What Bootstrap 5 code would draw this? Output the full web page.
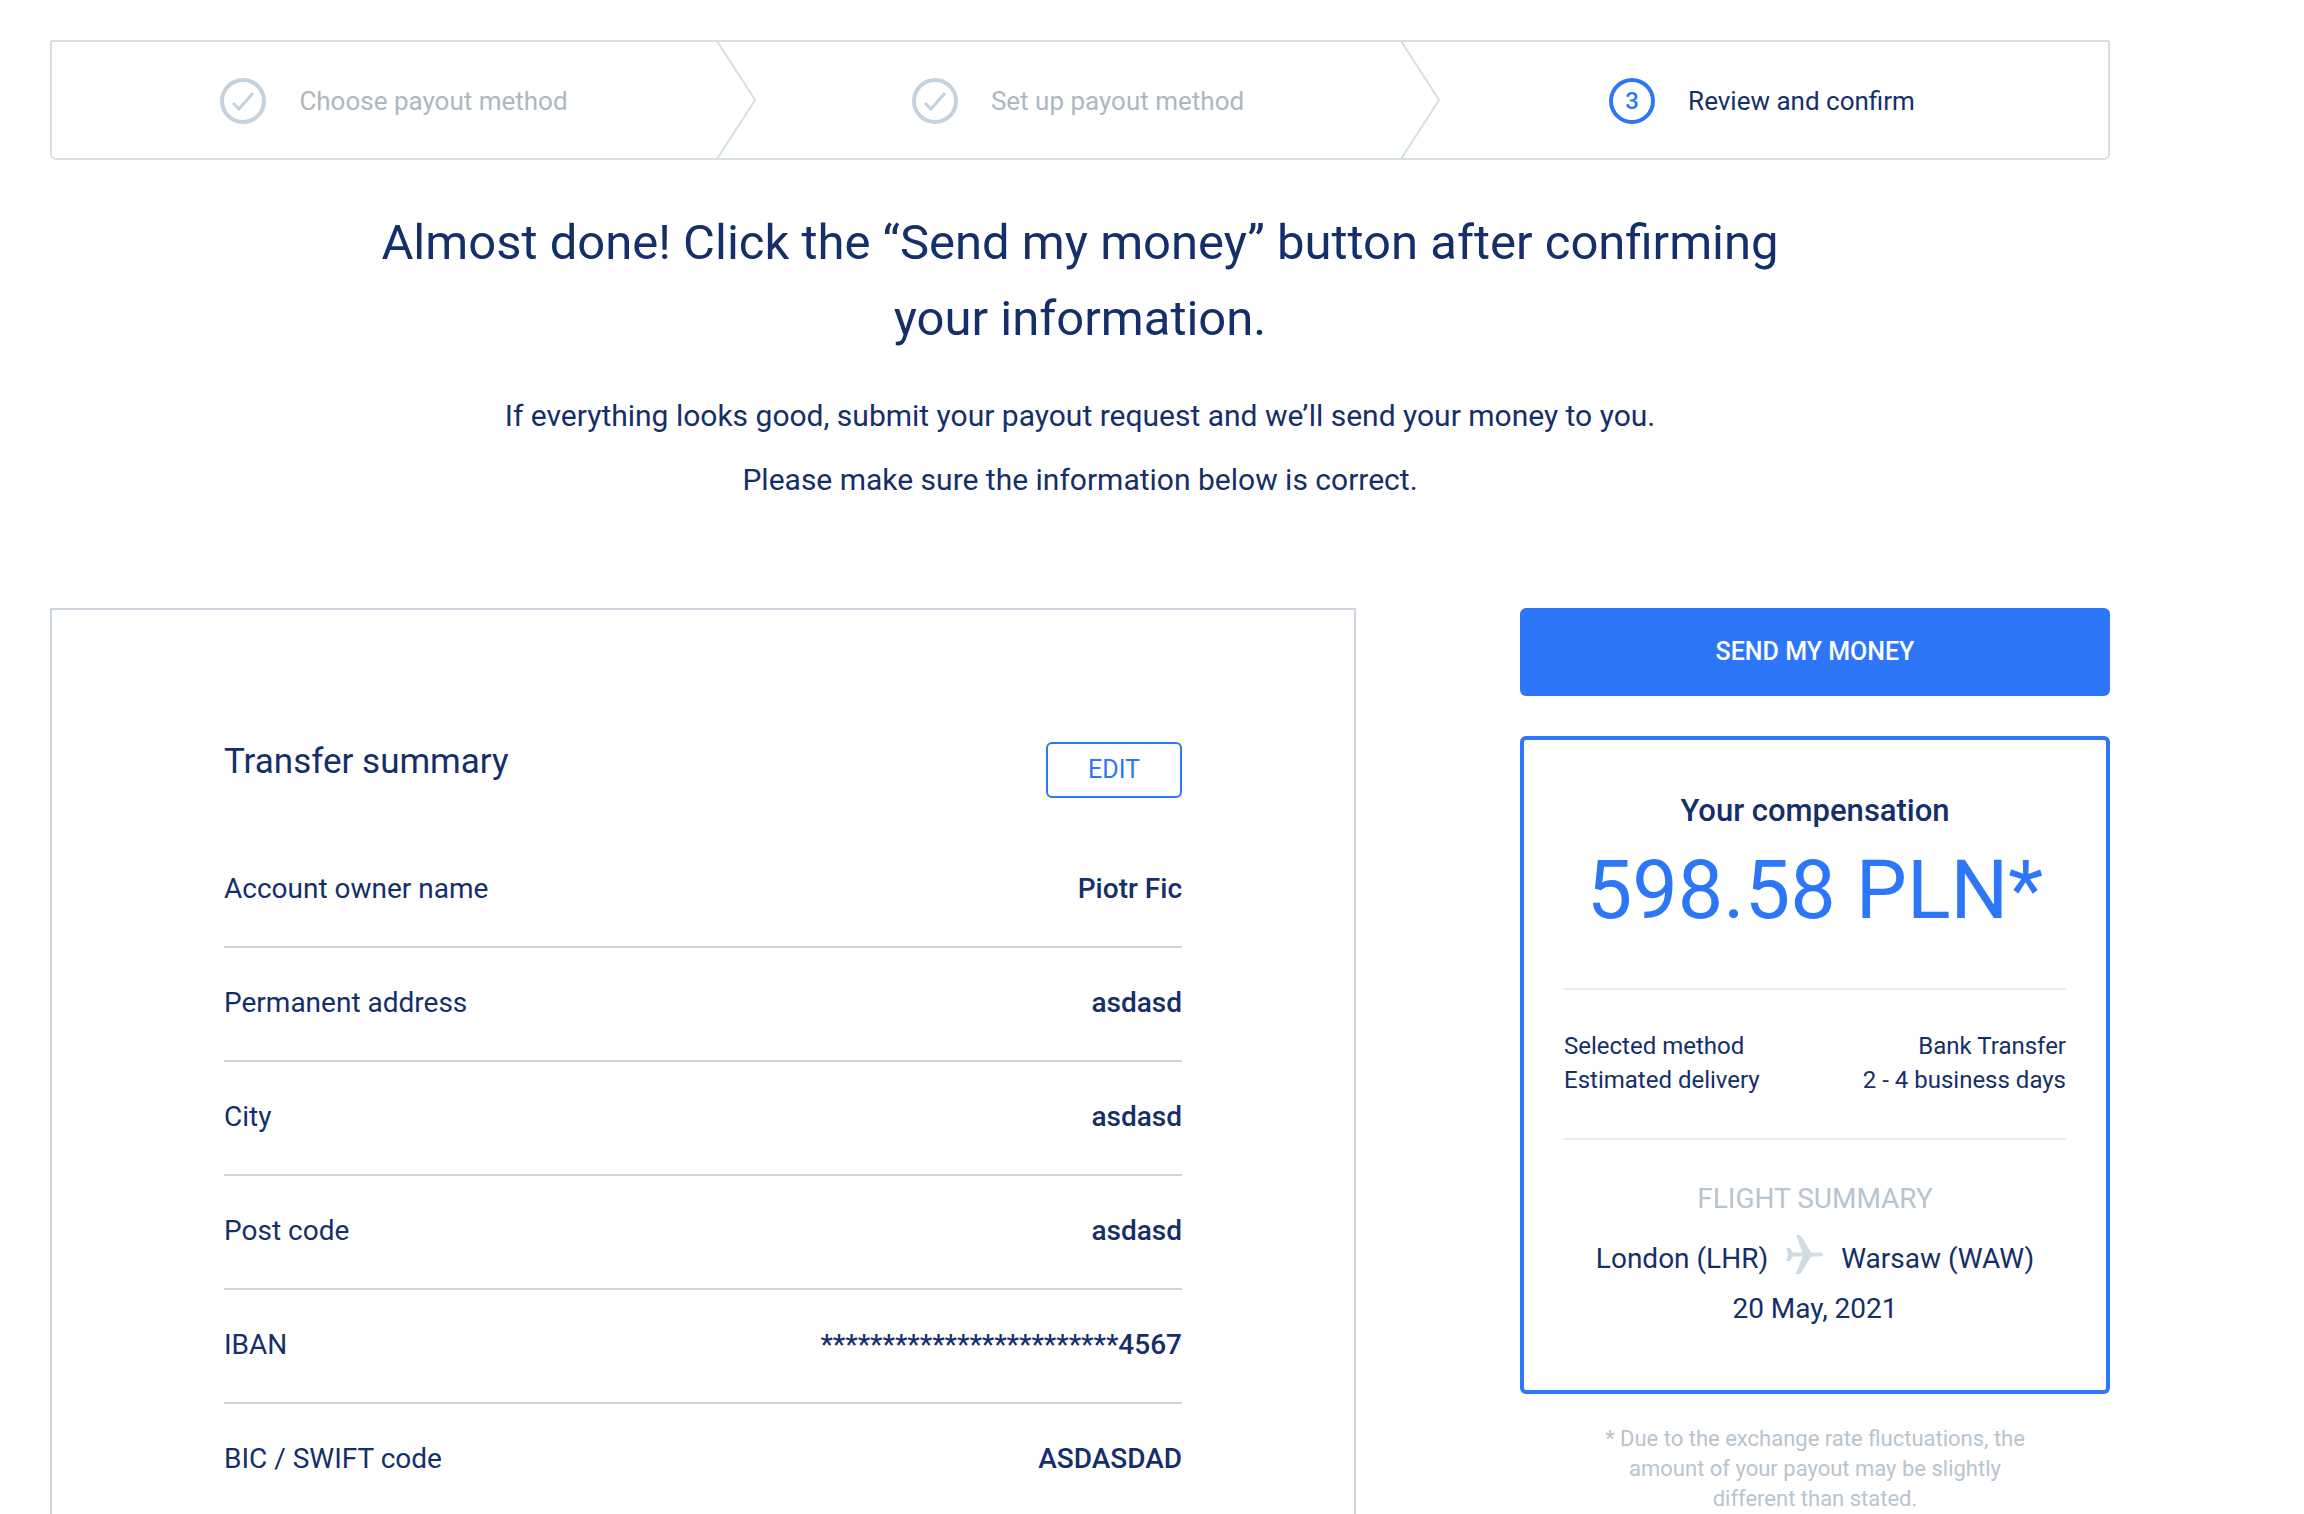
<!DOCTYPE html>
<html lang="en">
<head>
<meta charset="utf-8">
<meta name="viewport" content="width=device-width, initial-scale=1">
<title>Review and confirm</title>
<link href="https://cdn.jsdelivr.net/npm/bootstrap@5.3.0/dist/css/bootstrap.min.css" rel="stylesheet">
<style>
  :root { --navy: #142f69; --blue: #2e76f8; --line: #ccd5df; --step-line: #d6dfe2; --muted: #b8c4ce; }
  body { font-family: Roboto, "Liberation Sans", sans-serif; font-size: 28px; line-height: 40px; color: var(--navy); background: #fff; }
  .page { padding: 40px 194px 0 50px; }
  .steps { border: 2px solid var(--step-line); border-radius: 2px 2px 6px 6px; height: 120px; padding-right: 4px; }
  .step { gap: 33px; padding-top: 2px; color: #adb7c0; font-size: 26px; }
  .step.current { color: var(--navy); }
  .step-dot { width: 46px; height: 46px; border: 4px solid #c5d1dc; border-radius: 50%; color: #c5d1dc; }
  .current .step-dot { border-color: var(--blue); color: var(--blue); font-size: 24px; font-weight: 500; }
  .chevron { position: absolute; right: -20px; top: -1px; width: 40px; height: 118px; z-index: 1; }
  .intro { padding: 45px 0 96px; }
  .intro h1 { font-size: 49px; line-height: 76px; max-width: 1440px; margin: 0 auto 27px; font-weight: 400; }
  .intro p { font-size: 30px; line-height: 64px; }
  .columns { display: grid; grid-template-columns: 1306fr 590fr; gap: 164px; }
  .transfer { border: 2px solid var(--line); padding: 132px 172px; }
  .transfer h2 { font-size: 35px; line-height: 40px; font-weight: 400; }
  .btn { border-radius: 6px; --bs-btn-color: var(--blue); --bs-btn-border-color: var(--blue); font-size: 25px; line-height: 32px; }
  .btn-edit { border-width: 2px; padding: 10px 40px; }
  .btn-send { --bs-btn-color: #fff; --bs-btn-bg: var(--blue); --bs-btn-hover-bg: #1f66e6; --bs-btn-hover-color: #fff; border: 0; padding: 28px; font-weight: 500; }
  .details { margin-top: 36px; --bs-table-color: var(--navy); --bs-table-bg: transparent; }
  .details > tbody > tr > * { padding: 35px 0 37px; border-bottom: 2px solid var(--line); font-weight: 400; }
  .details > tbody > tr > td { font-weight: 500; text-align: right; }
  .payout { border: 4px solid var(--blue); border-radius: 6px; padding: 51px 40px 56px; margin-top: 40px; }
  .payout h3 { font-size: 31px; line-height: 40px; margin-bottom: 12px; font-weight: 500; }
  .amount { font-size: 81px; line-height: 96px; color: var(--blue); white-space: nowrap; }
  .method { font-size: 24px; line-height: 34px; border: solid #e9ecee; border-width: 2px 0; margin: 49px 0 39px; padding: 39px 0 41px; }
  .flight-title { color: var(--muted); margin-bottom: 15px; }
  .flight { line-height: 50px; }
  .route { gap: 18px; }
  .plane { width: 37px; height: 39px; margin-bottom: 10px; }
  .note { font-size: 22px; line-height: 30px; color: var(--muted); max-width: 440px; margin: 30px auto 0; }
</style>
<script src="https://cdn.jsdelivr.net/npm/bootstrap@5.3.0/dist/js/bootstrap.bundle.min.js" defer></script>
</head>
<body>
<main class="page">
  <ol class="steps list-unstyled d-flex mb-0">
    <li class="step position-relative d-flex align-items-center justify-content-center w-100">
      <span class="step-dot d-flex align-items-center justify-content-center"><svg width="38" height="38" viewBox="0 0 38 38" fill="none" stroke="currentColor" stroke-width="3"><path d="M9 21l6 6 14-16"/></svg></span>
      <span>Choose payout method</span>
      <svg class="chevron" viewBox="0 0 40 118" fill="none" stroke="#d6dfe2" stroke-width="2"><path d="M1 0l38 59-38 59"/></svg>
    </li>
    <li class="step position-relative d-flex align-items-center justify-content-center w-100">
      <span class="step-dot d-flex align-items-center justify-content-center"><svg width="38" height="38" viewBox="0 0 38 38" fill="none" stroke="currentColor" stroke-width="3"><path d="M9 21l6 6 14-16"/></svg></span>
      <span>Set up payout method</span>
      <svg class="chevron" viewBox="0 0 40 118" fill="none" stroke="#d6dfe2" stroke-width="2"><path d="M1 0l38 59-38 59"/></svg>
    </li>
    <li class="step current d-flex align-items-center justify-content-center w-100" aria-current="step">
      <span class="step-dot d-flex align-items-center justify-content-center">3</span>
      <span>Review and confirm</span>
    </li>
  </ol>

  <header class="intro text-center">
    <h1>Almost done! Click the “Send my money” button after confirming your information.</h1>
    <p class="mb-0">If everything looks good, submit your payout request and we’ll send your money to you.</p>
    <p class="mb-0">Please make sure the information below is correct.</p>
  </header>

  <div class="columns">
    <section class="transfer">
      <div class="d-flex justify-content-between align-items-start">
        <h2 class="mb-0">Transfer summary</h2>
        <button type="button" class="btn btn-edit">EDIT</button>
      </div>
      <table class="table details mb-0">
        <tbody>
          <tr><th scope="row">Account owner name</th><td>Piotr Fic</td></tr>
          <tr><th scope="row">Permanent address</th><td>asdasd</td></tr>
          <tr><th scope="row">City</th><td>asdasd</td></tr>
          <tr><th scope="row">Post code</th><td>asdasd</td></tr>
          <tr><th scope="row">IBAN</th><td>************************4567</td></tr>
          <tr><th scope="row">BIC / SWIFT code</th><td>ASDASDAD</td></tr>
        </tbody>
      </table>
    </section>

    <aside>
      <button type="button" class="btn btn-send w-100">SEND MY MONEY</button>
      <section class="payout text-center">
        <h3>Your compensation</h3>
        <div class="amount">598.58 PLN*</div>
        <div class="method">
          <div class="d-flex justify-content-between"><span>Selected method</span><span>Bank Transfer</span></div>
          <div class="d-flex justify-content-between"><span>Estimated delivery</span><span>2 - 4 business days</span></div>
        </div>
        <div class="flight-title">FLIGHT SUMMARY</div>
        <div class="flight">
          <div class="route d-flex justify-content-center align-items-center">
            <span>London (LHR)</span>
            <svg class="plane" viewBox="0 0 37 39" fill="#d0dce1" aria-hidden="true"><path d="M10 0h3q1.500 0 2.500 1.500L25 17.500h9.500q2.500 0 2.500 2t-2.500 2H25L15.500 37.500q-1 1.500-2.500 1.500h-3l6.500-17.500H7L4 26H0l2-6.500L0 13h4l3 4.500h9.500z"/></svg>
            <span>Warsaw (WAW)</span>
          </div>
          <div>20 May, 2021</div>
        </div>
      </section>
      <p class="note text-center">* Due to the exchange rate fluctuations, the amount of your payout may be slightly different than stated.</p>
    </aside>
  </div>
</main>
</body>
</html>
